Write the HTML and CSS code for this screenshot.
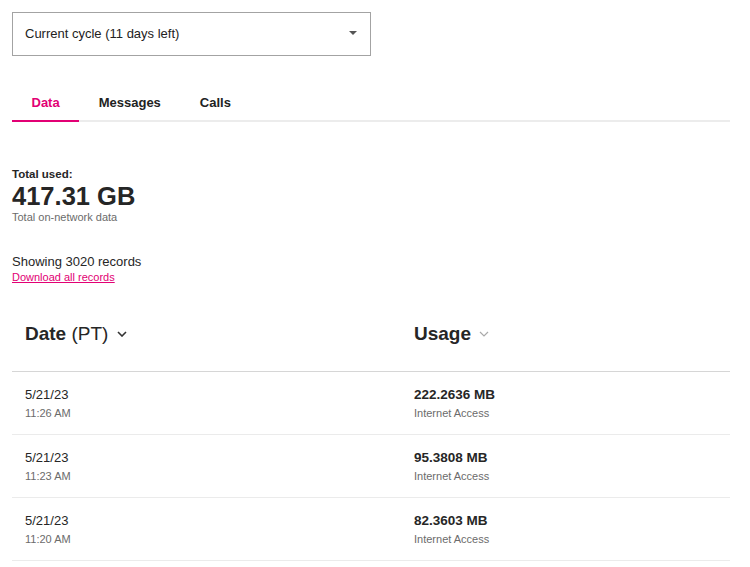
FILE: index.html
```html
<!DOCTYPE html>
<html lang="en">
<head>
    <meta charset="UTF-8">
    <meta name="viewport" content="width=device-width, initial-scale=1.0">
    <title>Usage</title>
    <link rel="stylesheet" href="styles.css">
</head>
<body>
    <div class="usage-page">
        <div class="cycle-select">
            <span>Current cycle (11 days left)</span>
            <span class="select-arrow"></span>
        </div>

        <div class="tabs">
            <div class="tab active">Data</div>
            <div class="tab">Messages</div>
            <div class="tab">Calls</div>
        </div>

        <div class="total">
            <p class="total-label">Total used:</p>
            <p class="total-value">417.31 GB</p>
            <p class="total-sub">Total on-network data</p>
        </div>

        <div class="records">
            <p class="records-count">Showing 3020 records</p>
            <a href="#" class="records-link">Download all records</a>
        </div>

        <div class="usage-table">
            <div class="row head">
                <div class="cell">
                    <b>Date</b>&nbsp;(PT)
                    <svg class="chev" width="10" height="6" viewBox="0 0 10 6"><path d="M1 1l4 4 4-4" fill="none" stroke="#333" stroke-width="1.6"/></svg>
                </div>
                <div class="cell">
                    <b>Usage</b>
                    <svg class="chev light" width="10" height="6" viewBox="0 0 10 6"><path d="M1 1l4 4 4-4" fill="none" stroke="#aaa" stroke-width="1.2"/></svg>
                </div>
            </div>
            <div class="row">
                <div class="cell"><p class="main">5/21/23</p><p class="sub">11:26 AM</p></div>
                <div class="cell"><p class="main bold">222.2636 MB</p><p class="sub">Internet Access</p></div>
            </div>
            <div class="row">
                <div class="cell"><p class="main">5/21/23</p><p class="sub">11:23 AM</p></div>
                <div class="cell"><p class="main bold">95.3808 MB</p><p class="sub">Internet Access</p></div>
            </div>
            <div class="row">
                <div class="cell"><p class="main">5/21/23</p><p class="sub">11:20 AM</p></div>
                <div class="cell"><p class="main bold">82.3603 MB</p><p class="sub">Internet Access</p></div>
            </div>
        </div>
    </div>
</body>
</html>
```

FILE: styles.css
```css
*{
    margin: 0;
    padding: 0;
    box-sizing: border-box;
    font-family: "Liberation Sans", Arial, Helvetica, sans-serif;
}

body{
    background-color: #fff;
    color: #262626;
}

.usage-page{
    width: 718px;
    margin: 12px 0 0 12px;
}

.cycle-select{
    width: 359px;
    height: 44px;
    border: 1px solid #a3a3a3;
    display: flex;
    align-items: center;
    justify-content: space-between;
    padding: 0 13px 2px 12px;
    font-size: 13px;
    color: #222;
}

.select-arrow{
    width: 0;
    height: 0;
    border-left: 4px solid transparent;
    border-right: 4px solid transparent;
    border-top: 4px solid #555;
}

.tabs{
    display: flex;
    margin-top: 29px;
    border-bottom: 2px solid #ececec;
}

.tab{
    padding: 10px 19.5px 9px;
    font-size: 13px;
    line-height: 16px;
    font-weight: bold;
    color: #222;
    border-bottom: 2px solid transparent;
    margin-bottom: -2px;
}

.tab.active{
    color: #e20074;
    border-bottom-color: #e20074;
}

.total{
    margin-top: 45px;
}

.total-label{
    font-size: 11.5px;
    line-height: 14px;
    font-weight: bold;
}

.total-value{
    font-size: 25.5px;
    line-height: 28px;
    font-weight: bold;
    margin-top: 1px;
}

.total-sub{
    font-size: 11px;
    line-height: 14px;
    color: #6b6b6b;
}

.records{
    margin-top: 30px;
}

.records-count{
    font-size: 13px;
    line-height: 16px;
}

.records-link{
    display: block;
    font-size: 11px;
    line-height: 14px;
    color: #e20074;
}

.usage-table{
    margin-top: 38px;
}

.row{
    display: grid;
    grid-template-columns: 389px 1fr;
    border-bottom: 1px solid #ebebeb;
    padding: 15px 0 14px;
}

.row.head{
    border-bottom-color: #d6d6d6;
    padding: 0 0 25px;
}

.cell{
    padding-left: 13px;
}

.head .cell{
    font-size: 19px;
    line-height: 24px;
    display: flex;
    align-items: center;
}

.chev{
    margin-left: 9px;
}

.chev.light{
    margin-left: 8px;
}

.main{
    font-size: 13px;
    line-height: 16px;
}

.main.bold{
    font-size: 13.5px;
    font-weight: bold;
}

.sub{
    font-size: 11px;
    line-height: 14px;
    color: #6b6b6b;
    margin-top: 3px;
}
```
